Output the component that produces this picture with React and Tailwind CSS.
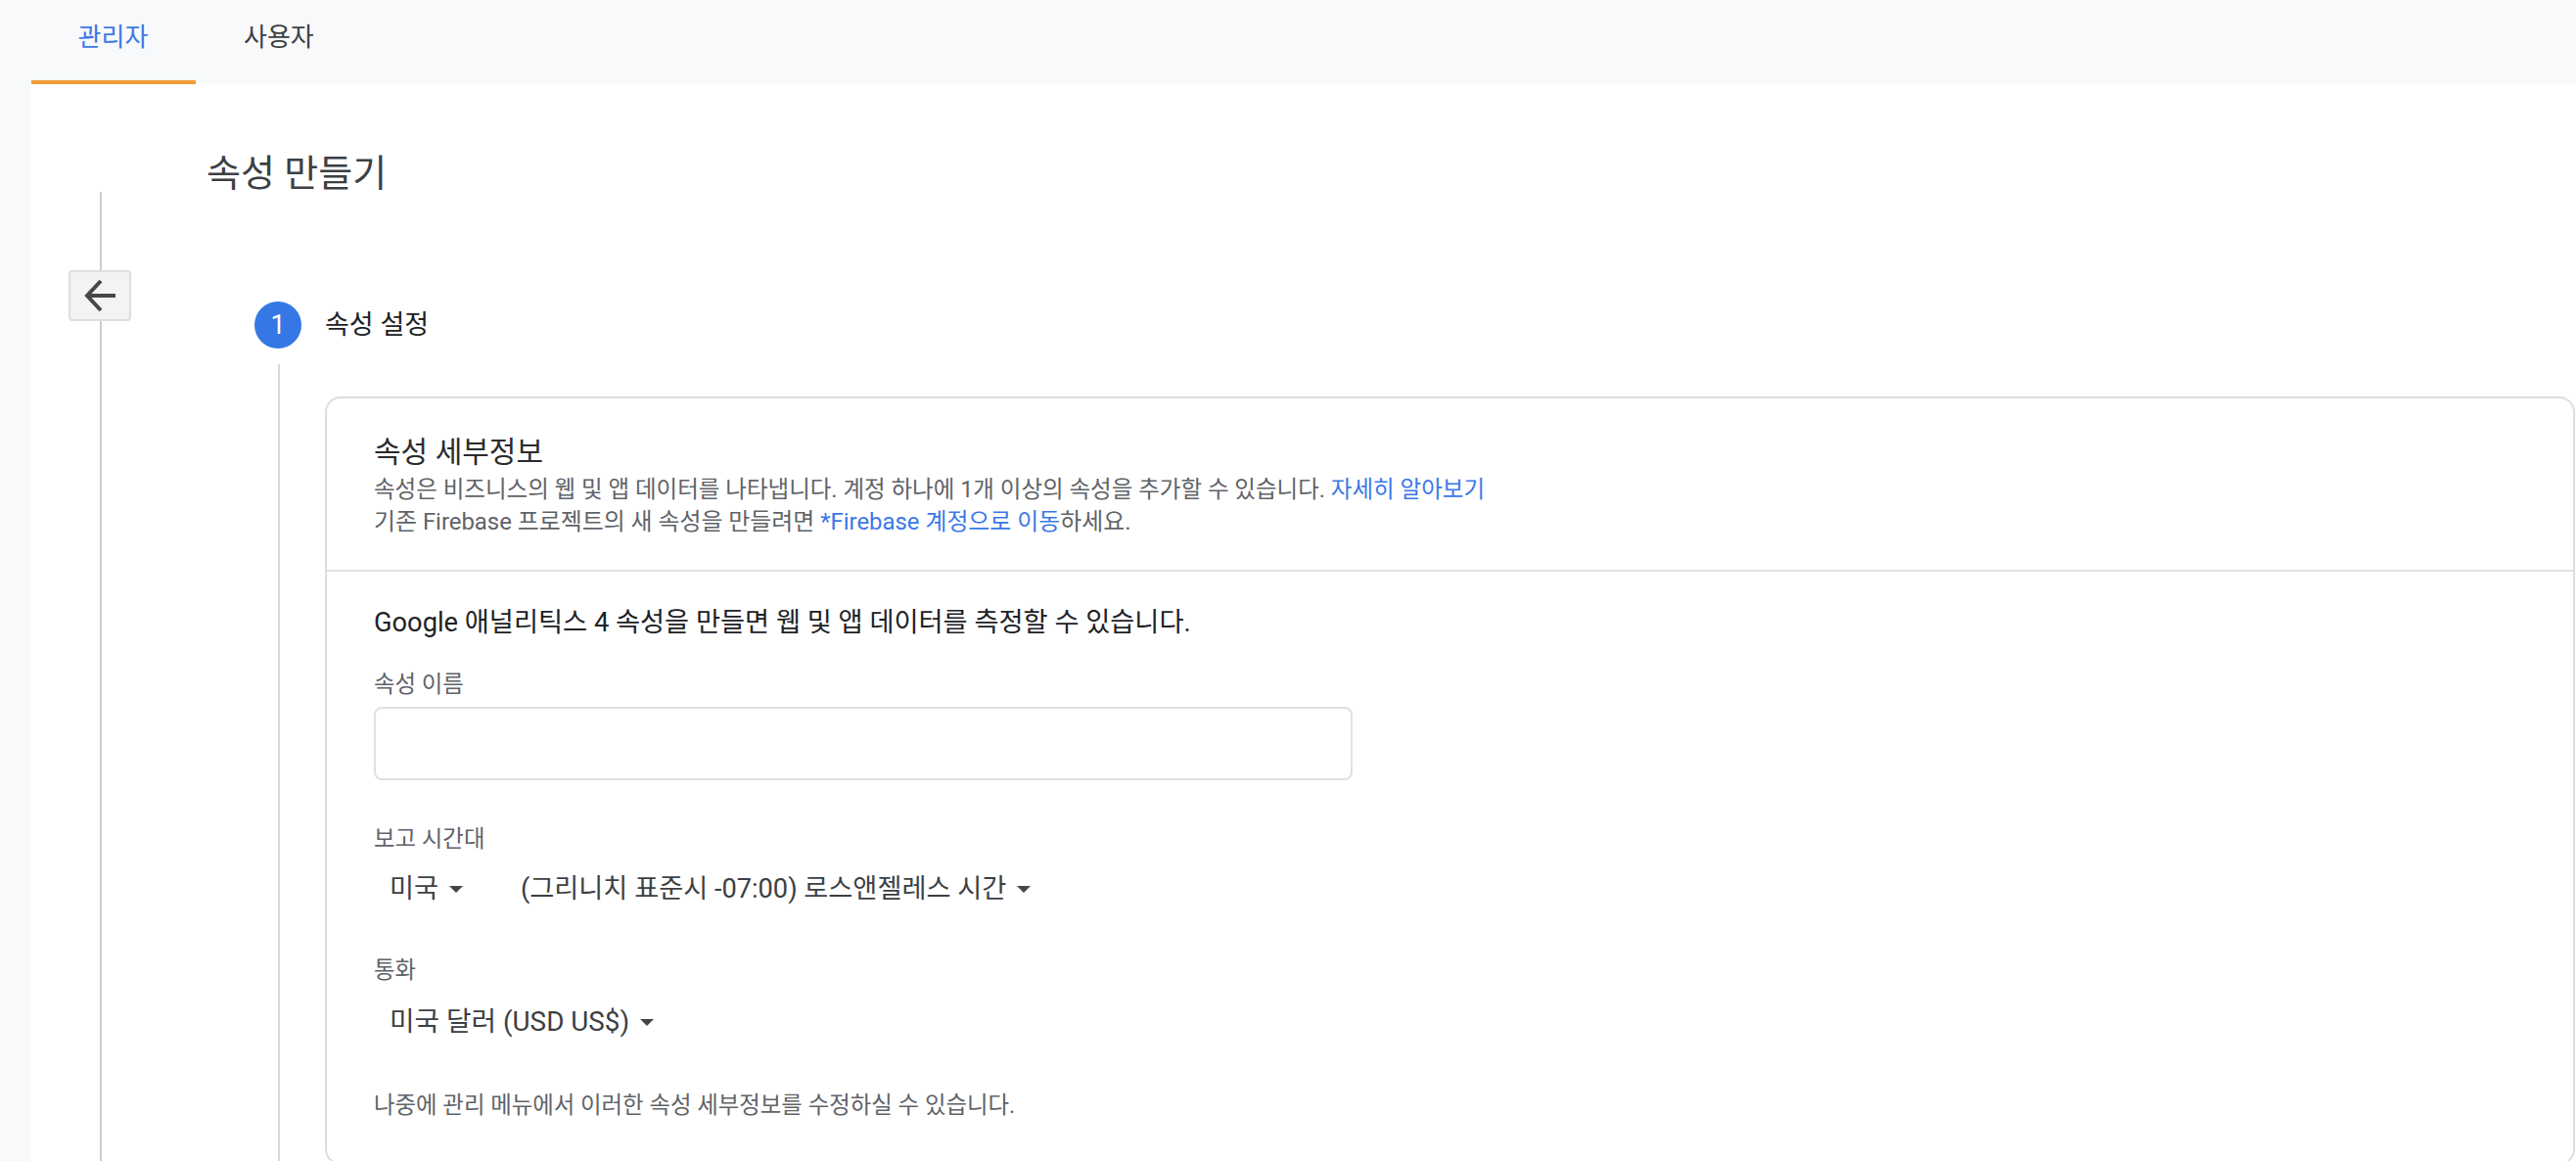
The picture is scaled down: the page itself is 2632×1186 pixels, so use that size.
import React from "react";

const font = { fontFamily: '"Roboto","Noto Sans CJK KR",sans-serif' };

function Caret() {
  return <span className="ml-[11px] w-0 h-0 border-x-[7px] border-x-transparent border-t-[7px] border-t-[#444746] mt-[1px]" />;
}

function Select({ children }) {
  return (
    <span className="inline-flex items-center text-[27.2px] leading-[40px] text-[#3c4043]">
      {children}
      <Caret />
    </span>
  );
}

export default function App() {
  return (
    <div style={font} className="w-[2632px] h-[1186px] overflow-hidden bg-[#f8f9fb] flex flex-col">
      <header className="h-[86px] shrink-0 pl-[32px] flex">
        <div className="w-[168px] h-[86px] border-b-[4px] border-[#f19c38] flex justify-center pt-[19px] text-[26px] leading-[38px] text-[#3b78e7]">
          <span className="-ml-[1px]">관리자</span>
        </div>
        <div className="ml-[49px] pt-[19px] text-[26px] leading-[38px] text-[#3c4043]">사용자</div>
      </header>

      <main className="flex-1 ml-[32px] bg-white flex min-h-0">
        <div className="ml-[38px] w-[64px] shrink-0 flex flex-col items-center pt-[110px]">
          <div className="w-[2px] h-[80px] bg-[#cccccc] ml-[2px]" />
          <button className="w-[64px] h-[52px] shrink-0 flex items-center justify-center rounded-[4px] border-2 border-[#dedede] bg-[#f3f3f3]">
            <svg width="36" height="36" viewBox="0 0 36 36" fill="none" stroke="#474747" strokeWidth="4" className="ml-[1px]">
              <path d="M33 18H5M18 3 4 18l14 15" />
            </svg>
          </button>
          <div className="w-[2px] flex-1 bg-[#cccccc] ml-[2px]" />
        </div>

        <div className="flex-1 min-w-0 pl-[77px] flex flex-col">
          <h1 className="mt-[66px] h-[50px] text-[38px] leading-[50px] font-normal text-[#3c4043]">속성 만들기</h1>

          <div className="ml-[49px] mt-[106px] flex items-center h-[48px]">
            <span className="w-[48px] h-[48px] rounded-full bg-[#3578e5] text-white text-[27px] font-normal flex items-center justify-center">1</span>
            <span className="ml-[24px] text-[27px] leading-[38px] font-normal text-[#202124]">속성 설정</span>
          </div>

          <div className="ml-[73px] flex flex-1 min-h-0">
            <div className="w-[2px] mt-[16px] bg-[#dadada] shrink-0" />
            <section className="ml-[46px] mt-[49px] w-[2299px] h-[785px] shrink-0 rounded-[16px] border-2 border-[#dddde2] bg-white">
              <div className="h-[177px] border-b-2 border-[#e0e0e3] pl-[48px] pt-[35px]">
                <h2 className="text-[30px] leading-[40px] font-normal text-[#2a2b2e]">속성 세부정보</h2>
                <p className="mt-[2px] text-[23.5px] leading-[33px] text-[#5f6368]">
                  속성은 비즈니스의 웹 및 앱 데이터를 나타냅니다. 계정 하나에 1개 이상의 속성을 추가할 수 있습니다. <span className="text-[#3b78e7]">자세히 알아보기</span>
                </p>
                <p className="text-[23.9px] leading-[33px] text-[#5f6368]">
                  기존 Firebase 프로젝트의 새 속성을 만들려면 <span className="text-[#3b78e7]">*Firebase 계정으로 이동</span>하세요.
                </p>
              </div>
              <div className="pl-[48px] pt-[33px]">
                <p className="text-[27.25px] leading-[38px] text-[#202124]">Google 애널리틱스 4 속성을 만들면 웹 및 앱 데이터를 측정할 수 있습니다.</p>
                <label className="block mt-[28px] text-[23.4px] leading-[32px] text-[#5f6368]">속성 이름</label>
                <div className="mt-[7px] w-[1000px] h-[75px] rounded-[8px] border-2 border-[#e0e0e0]" />
                <label className="block mt-[44px] text-[23.4px] leading-[32px] text-[#5f6368]">보고 시간대</label>
                <div className="mt-[15px] pl-[16px] flex">
                  <Select>미국</Select>
                  <span className="ml-[59px]"><Select>(그리니치 표준시 -07:00) 로스앤젤레스 시간</Select></span>
                </div>
                <label className="block mt-[47px] text-[23.4px] leading-[32px] text-[#5f6368]">통화</label>
                <div className="mt-[17px] pl-[16px] flex">
                  <Select><span className="text-[27.8px]">미국 달러 (USD US$)</span></Select>
                </div>
                <p className="mt-[49px] text-[23.4px] leading-[32px] text-[#5f6368]">나중에 관리 메뉴에서 이러한 속성 세부정보를 수정하실 수 있습니다.</p>
              </div>
            </section>
          </div>
        </div>
      </main>
    </div>
  );
}
